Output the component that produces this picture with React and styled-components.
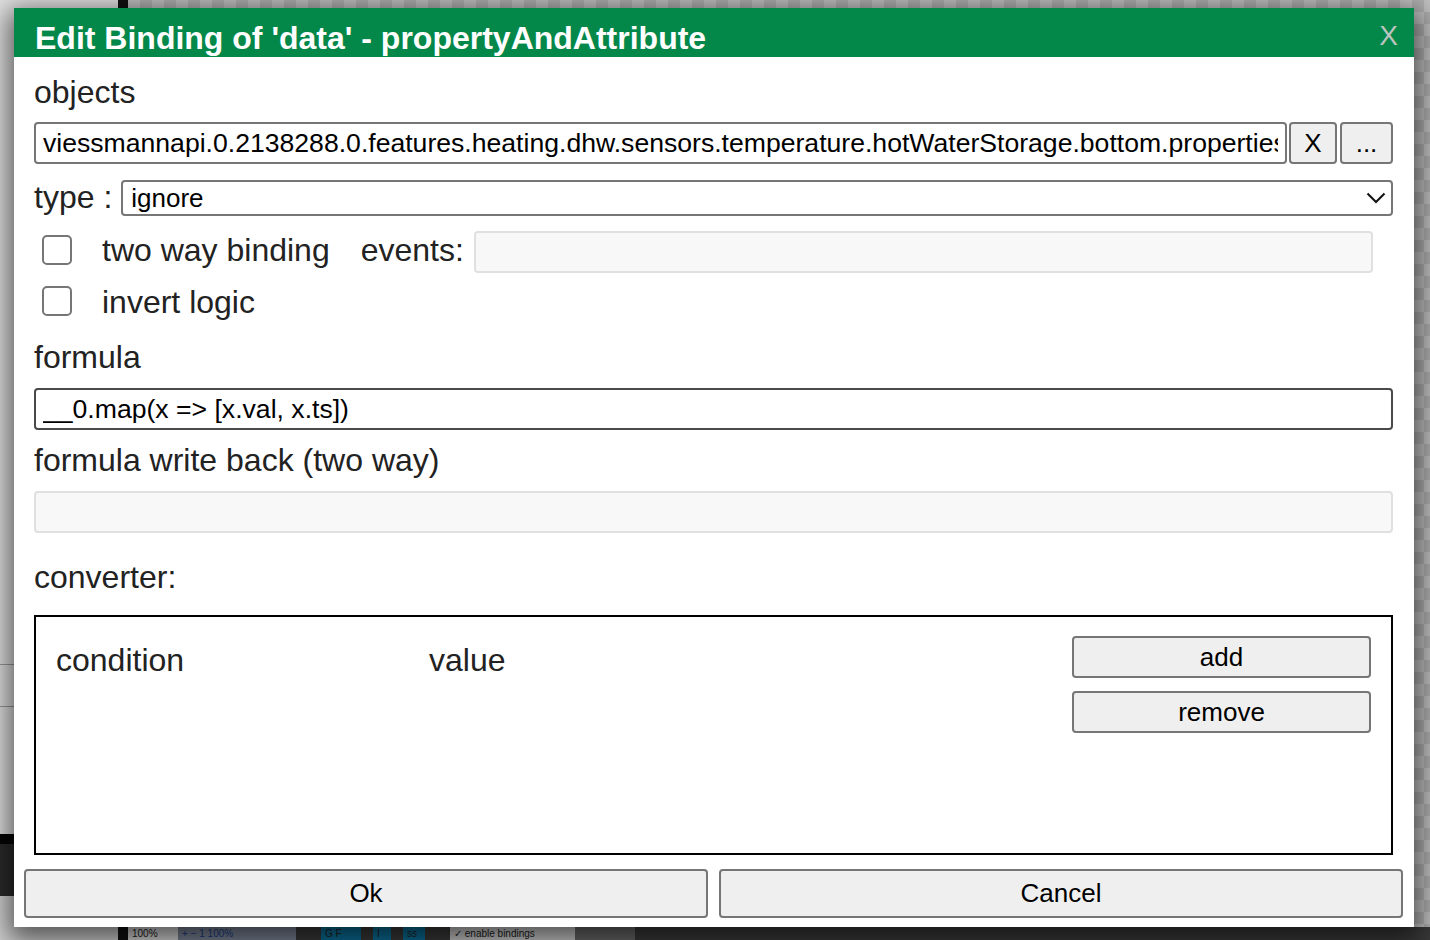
import styled, { createGlobalStyle } from "styled-components";

const GlobalStyle = createGlobalStyle`
  html, body {
    margin: 0;
    padding: 0;
    width: 1430px;
    height: 940px;
    overflow: hidden;
  }
  body {
    font-family: "Liberation Sans", Arial, Helvetica, sans-serif;
    color: #222;
  }
  * { box-sizing: border-box; }
`;

const Page = styled.div`
  position: relative;
  width: 1430px;
  height: 940px;
  display: grid;
  grid-template-columns: 118px 1fr;
  overflow: hidden;
`;

const SidePanel = styled.div`
  display: flex;
  flex-direction: column;
  background: #e2e2e2;
`;

const SideBlock = styled.div`
  height: ${(p) => p.$h}px;
  background: ${(p) => p.$bg || "transparent"};
  border-bottom: ${(p) => (p.$line ? "1px solid #9a9a9a" : "none")};
  flex: ${(p) => (p.$grow ? 1 : "none")};
`;

const Workspace = styled.div`
  display: flex;
  flex-direction: column;
  border-left: 10px solid #111;
`;

const Canvas = styled.div`
  flex: 1;
  background-color: #c2c2c2;
  background-image:
    linear-gradient(45deg, #b0b0b0 25%, transparent 25%, transparent 75%, #b0b0b0 75%),
    linear-gradient(45deg, #b0b0b0 25%, transparent 25%, transparent 75%, #b0b0b0 75%);
  background-size: 24px 24px;
  background-position: 0 0, 12px 12px;
`;

const StatusBar = styled.div`
  height: 13px;
  display: flex;
  align-items: flex-start;
  background: #3a3a3a;
  overflow: hidden;
  font-size: 10px;
  line-height: 13px;
  color: #222;
`;

const StatusItem = styled.div`
  width: ${(p) => p.$w}px;
  height: 13px;
  padding: 0 4px;
  background: ${(p) => p.$bg};
  color: ${(p) => p.$color || "#222"};
  white-space: nowrap;
`;

const Dialog = styled.div`
  position: absolute;
  left: 14px;
  top: 8px;
  width: 1400px;
  height: 919px;
  background: #fff;
  display: flex;
  flex-direction: column;
  box-shadow: 0 8px 26px 6px rgba(0, 0, 0, 0.6);
`;

const TitleBar = styled.div`
  height: 49px;
  background: #03884a;
  display: flex;
  justify-content: space-between;
  align-items: flex-start;
  padding: 14px 16px 0 21px;
`;

const Title = styled.div`
  font-size: 32px;
  line-height: 32px;
  font-weight: bold;
  color: #fff;
  white-space: nowrap;
`;

const CloseX = styled.div`
  font-size: 28px;
  line-height: 32px;
  color: #b9c4be;
  margin-top: -2px;
`;

const Body = styled.div`
  display: flex;
  flex-direction: column;
  padding: 0 21px 0 20px;
`;

const Label = styled.div`
  font-size: 32px;
  line-height: 36px;
  height: 36px;
  margin-top: ${(p) => p.$top}px;
  color: #222;
  white-space: nowrap;
`;

const Row = styled.div`
  display: flex;
  align-items: center;
  height: ${(p) => p.$h}px;
  margin-top: ${(p) => p.$top}px;
`;

const TextInput = styled.input`
  flex: ${(p) => (p.$block ? "none" : 1)};
  min-width: 0;
  height: ${(p) => p.$h || 42}px;
  margin-top: ${(p) => p.$top || 0}px;
  margin-right: ${(p) => p.$right || 0}px;
  padding: 0 7px;
  font-family: inherit;
  font-size: 26.6px;
  color: #000;
  background: ${(p) => (p.$muted ? "#f8f8f8" : "#fff")};
  border: 2px solid ${(p) => (p.$muted ? "#e0e0e0" : p.$strong ? "#4a4a4a" : "#767676")};
  border-radius: 4px;
  outline: none;
`;

const SmallButton = styled.button`
  width: ${(p) => p.$w}px;
  height: 42px;
  margin-left: ${(p) => p.$gap}px;
  padding: 0;
  font-family: inherit;
  font-size: 26px;
  color: #000;
  background: #efefef;
  border: 2px solid #767676;
  border-radius: 4px;
`;

const InlineLabel = styled.span`
  font-size: 32px;
  line-height: 36px;
  margin-right: ${(p) => p.$gap}px;
  margin-top: ${(p) => p.$shift || 0}px;
  white-space: nowrap;
`;

const SelectWrap = styled.div`
  position: relative;
  flex: 1;
  height: 36px;
`;

const Select = styled.select`
  appearance: none;
  width: 100%;
  height: 36px;
  padding: 0 8px;
  font-family: inherit;
  font-size: 26px;
  color: #000;
  background: #fff;
  border: 2px solid #767676;
  border-radius: 4px;
  outline: none;
`;

const Chevron = styled.svg`
  position: absolute;
  right: 7px;
  top: 12px;
  pointer-events: none;
`;

const CheckBox = styled.span`
  width: 30px;
  height: 30px;
  margin-left: 8px;
  margin-right: 30px;
  margin-top: -4px;
  border: 2px solid #767676;
  border-radius: 5px;
  background: #fff;
  flex: none;
`;

const Converter = styled.div`
  height: 240px;
  margin-top: 20px;
  border: 2px solid #000;
  display: flex;
  align-items: flex-start;
  padding: 19px 20px 0 20px;
`;

const ConverterHead = styled.div`
  width: ${(p) => (p.$w ? `${p.$w}px` : "auto")};
  flex: ${(p) => (p.$w ? "none" : 1)};
  font-size: 32px;
  line-height: 36px;
  margin-top: 6px;
  color: #222;
`;

const ConverterActions = styled.div`
  width: 299px;
  display: flex;
  flex-direction: column;
  gap: 13px;
`;

const ActionButton = styled.button`
  height: 42px;
  padding: 0;
  font-family: inherit;
  font-size: 26px;
  color: #000;
  background: #efefef;
  border: 2px solid #767676;
  border-radius: 4px;
`;

const ButtonPane = styled.div`
  display: grid;
  grid-template-columns: 1fr 1fr;
  gap: 11px;
  padding: 0 11px 0 10px;
  margin-top: 14px;
`;

const FooterButton = styled.button`
  height: 49px;
  padding: 0;
  font-family: inherit;
  font-size: 26px;
  color: #000;
  background: #efefef;
  border: 2px solid #767676;
  border-radius: 4px;
`;

const objectId =
  "viessmannapi.0.2138288.0.features.heating.dhw.sensors.temperature.hotWaterStorage.bottom.properties.value.value";

export default function App() {
  return (
    <>
      <GlobalStyle />
      <Page>
        <SidePanel>
          <SideBlock $h={665} $line />
          <SideBlock $h={42} $line />
          <SideBlock $h={127} />
          <SideBlock $h={10} $bg="#050505" />
          <SideBlock $h={52} $bg="#2b2b2b" />
          <SideBlock $grow $bg="#d4d4d4" />
        </SidePanel>
        <Workspace>
          <Canvas />
          <StatusBar>
            <StatusItem $w={50} $bg="#d9d9d9">100%</StatusItem>
            <StatusItem $w={118} $bg="#7b8596" $color="#1d3d8a">+ − 1 100%</StatusItem>
            <StatusItem $w={25} $bg="#3a3a3a" />
            <StatusItem $w={40} $bg="#0b6f98">G F</StatusItem>
            <StatusItem $w={12} $bg="#3a3a3a" />
            <StatusItem $w={18} $bg="#0b6f98">I</StatusItem>
            <StatusItem $w={12} $bg="#3a3a3a" />
            <StatusItem $w={22} $bg="#0b6f98">ss</StatusItem>
            <StatusItem $w={25} $bg="#3a3a3a" />
            <StatusItem $w={125} $bg="#cfcfcf">✓ enable bindings</StatusItem>
            <StatusItem $w={60} $bg="#6a6a6a" />
          </StatusBar>
        </Workspace>

        <Dialog>
          <TitleBar>
            <Title>Edit Binding of 'data' - propertyAndAttribute</Title>
            <CloseX>X</CloseX>
          </TitleBar>
          <Body>
            <Label $top={17}>objects</Label>
            <Row $h={42} $top={12}>
              <TextInput value={objectId} readOnly />
              <SmallButton $w={48} $gap={2}>X</SmallButton>
              <SmallButton $w={53} $gap={3}>...</SmallButton>
            </Row>
            <Row $h={36} $top={16}>
              <InlineLabel $gap={9} $shift={-3}>type :</InlineLabel>
              <SelectWrap>
                <Select defaultValue="ignore">
                  <option value="ignore">ignore</option>
                </Select>
                <Chevron width="20" height="12" viewBox="0 0 20 12">
                  <path d="M1.5 1.5 L10 10 L18.5 1.5" fill="none" stroke="#111" strokeWidth="2" />
                </Chevron>
              </SelectWrap>
            </Row>
            <Row $h={42} $top={15}>
              <CheckBox />
              <InlineLabel $gap={31} $shift={-4}>two way binding</InlineLabel>
              <InlineLabel $gap={10} $shift={-4}>events:</InlineLabel>
              <TextInput $muted $right={20} readOnly />
            </Row>
            <Row $h={42} $top={9}>
              <CheckBox />
              <InlineLabel $gap={0} $shift={-2}>invert logic</InlineLabel>
            </Row>
            <Label $top={15}>formula</Label>
            <TextInput $block $top={13} $strong value="__0.map(x => [x.val, x.ts])" readOnly />
            <Label $top={12}>formula write back (two way)</Label>
            <TextInput $block $top={13} $h={42} $muted readOnly />
            <Label $top={26}>converter:</Label>
            <Converter>
              <ConverterHead $w={373}>condition</ConverterHead>
              <ConverterHead>value</ConverterHead>
              <ConverterActions>
                <ActionButton>add</ActionButton>
                <ActionButton>remove</ActionButton>
              </ConverterActions>
            </Converter>
          </Body>
          <ButtonPane>
            <FooterButton>Ok</FooterButton>
            <FooterButton>Cancel</FooterButton>
          </ButtonPane>
        </Dialog>
      </Page>
    </>
  );
}
